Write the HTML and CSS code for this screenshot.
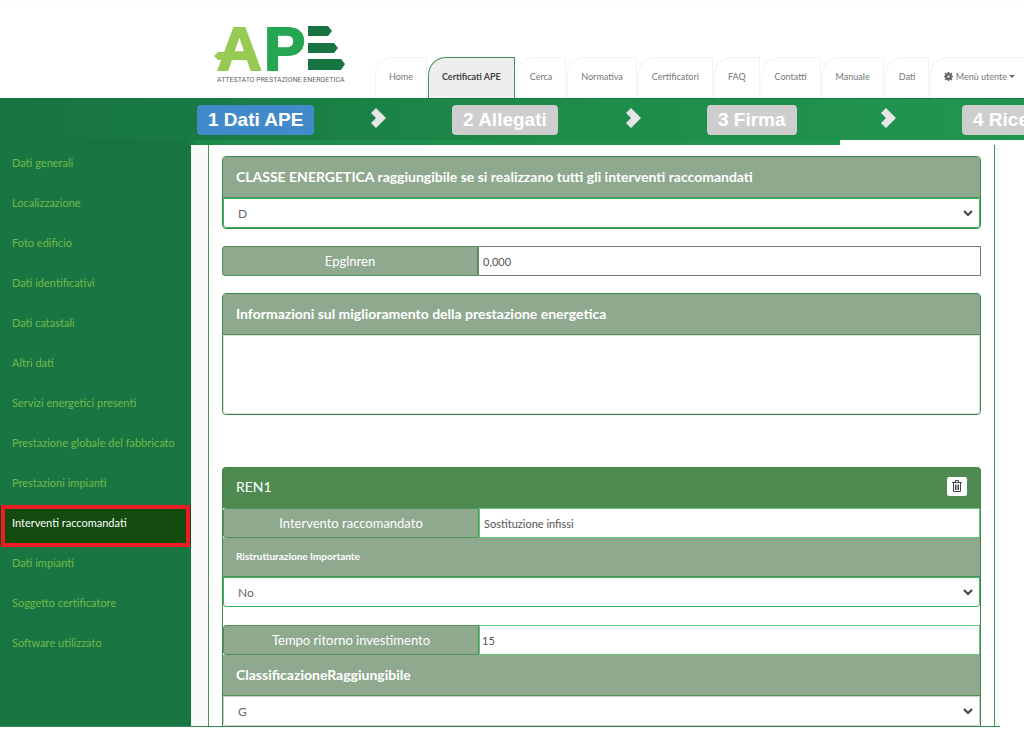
FILE: index.html
```html
<!DOCTYPE html>
<html lang="it">
<head>
    <meta charset="UTF-8">
    <meta name="viewport" content="width=device-width, initial-scale=1.0">
    <title>APE - Interventi raccomandati</title>
    <link rel="stylesheet" href="styles.css">
</head>
<body>

    <header class="header">
        <a class="logo" href="#">
            <svg width="140" height="64" viewBox="0 0 140 64" role="img" aria-label="APE Attestato Prestazione Energetica">
                <text class="logo-a" x="3" y="46">A</text>
                <path fill="#97cb53" d="M0 32l4-4h22v8H4z"/>
                <text class="logo-p" x="50" y="46">P</text>
                <g fill="#187441">
                    <path d="M94 2h20l4 5-4 5H94z"/>
                    <path d="M94 19h26l4 5-4 5H94z"/>
                    <path d="M94 35h33l4 5-4 6H94z"/>
                </g>
                <text class="logo-text" x="3" y="58">ATTESTATO PRESTAZIONE ENERGETICA</text>
            </svg>
        </a>
        <nav class="tabs">
            <a class="tab" href="#">Home</a>
            <a class="tab active" href="#">Certificati APE</a>
            <a class="tab" href="#">Cerca</a>
            <a class="tab" href="#">Normativa</a>
            <a class="tab" href="#">Certificatori</a>
            <a class="tab" href="#">FAQ</a>
            <a class="tab" href="#">Contatti</a>
            <a class="tab" href="#">Manuale</a>
            <a class="tab" href="#">Dati</a>
            <a class="tab" href="#">
                <svg class="gear" width="9" height="9" viewBox="0 0 16 16">
                    <circle cx="8" cy="8" r="4" fill="none" stroke="#666" stroke-width="4"/>
                    <path stroke="#666" stroke-width="3" d="M8 0v4M8 12v4M0 8h4M12 8h4M2 2l3 3M11 11l3 3M14 2l-3 3M5 11l-3 3"/>
                </svg>
                Menù utente<span class="caret"></span>
            </a>
        </nav>
    </header>

    <div class="steps">
        <div class="step">
            <a class="badge current" href="#">1 Dati APE</a>
            <svg width="16" height="22" viewBox="0 0 16 22"><path d="M0 6l5-5 10 10-10 10-5-5 5-5z" fill="#e6e6e6"/></svg>
        </div>
        <div class="step">
            <a class="badge" href="#">2 Allegati</a>
            <svg width="16" height="22" viewBox="0 0 16 22"><path d="M0 6l5-5 10 10-10 10-5-5 5-5z" fill="#e6e6e6"/></svg>
        </div>
        <div class="step">
            <a class="badge" href="#">3 Firma</a>
            <svg width="16" height="22" viewBox="0 0 16 22"><path d="M0 6l5-5 10 10-10 10-5-5 5-5z" fill="#e6e6e6"/></svg>
        </div>
        <div class="step">
            <a class="badge" href="#">4 Ricevuta</a>
        </div>
    </div>
    <div class="steps-edge"></div>

    <div class="page">
        <nav class="sidebar">
            <a href="#">Dati generali</a>
            <a href="#">Localizzazione</a>
            <a href="#">Foto edificio</a>
            <a href="#">Dati identificativi</a>
            <a href="#">Dati catastali</a>
            <a href="#">Altri dati</a>
            <a href="#">Servizi energetici presenti</a>
            <a href="#">Prestazione globale del fabbricato</a>
            <a href="#">Prestazioni impianti</a>
            <a class="active" href="#">Interventi raccomandati</a>
            <a href="#">Dati impianti</a>
            <a href="#">Soggetto certificatore</a>
            <a href="#">Software utilizzato</a>
        </nav>

        <main class="content">
            <form class="panel">
                <div class="card">
                    <label class="card-head" for="classe">CLASSE ENERGETICA raggiungibile se si realizzano tutti gli interventi raccomandati</label>
                    <select class="valid" id="classe">
                        <option>D</option>
                    </select>
                </div>

                <div class="row">
                    <label for="epglnren">Epglnren</label>
                    <input class="plain" type="text" id="epglnren" value="0,000">
                </div>

                <div class="card info">
                    <label class="card-head" for="info">Informazioni sul miglioramento della prestazione energetica</label>
                    <textarea id="info"></textarea>
                </div>

                <section class="card ren">
                    <div class="ren-head">
                        <span>REN1</span>
                        <button class="delete" type="button" aria-label="Elimina">
                            <svg width="10" height="12" viewBox="0 0 10 12" fill="none" stroke="#444">
                                <path d="M0 2.500h10M3.500 2V.5h3V2M1.500 3v8.500h7V3M3.500 4.500v5.500M5 4.500v5.500M6.500 4.500v5.500"/>
                            </svg>
                        </button>
                    </div>
                    <div class="row">
                        <label for="intervento">Intervento raccomandato</label>
                        <input type="text" id="intervento" value="Sostituzione infissi">
                    </div>
                    <label class="card-head small" for="ristrutturazione">Ristrutturazione Importante</label>
                    <select class="valid" id="ristrutturazione">
                        <option>No</option>
                    </select>
                    <div class="row spaced">
                        <label for="tempo">Tempo ritorno investimento</label>
                        <input class="tight" type="text" id="tempo" value="15">
                    </div>
                    <label class="card-head" for="classificazione">ClassificazioneRaggiungibile</label>
                    <select id="classificazione">
                        <option>G</option>
                    </select>
                </section>
            </form>
        </main>
    </div>

</body>
</html>
```
FILE: styles.css
```css
* {
    margin: 0;
    padding: 0;
    box-sizing: border-box;
}

body {
    font-family: Lato, 'Open Sans', sans-serif;
    font-size: 12px;
    color: #555;
    background-color: #fff;
}

a {
    text-decoration: none;
}

/* Testata */
.header {
    display: flex;
    align-items: flex-end;
    height: 98px;
    padding-left: 214px;
    overflow: hidden;
    border-top: 8px solid #fdfdfd;
}

.logo {
    flex: none;
    width: 161px;
    height: 74px;
}

.logo svg {
    overflow: visible;
}

.logo text {
    font-family: 'Liberation Sans', sans-serif;
    font-size: 62px;
    font-weight: bold;
}

.logo .logo-a {
    fill: #97cb53;
    stroke: #97cb53;
    stroke-width: 2px;
}

.logo .logo-p {
    fill: #25a653;
    stroke: #25a653;
    stroke-width: 2px;
}

.logo .logo-text {
    font-family: Roboto, sans-serif;
    font-size: 7px;
    font-weight: normal;
    fill: #666;
}

.tabs {
    display: flex;
    gap: 1px;
}

.tab {
    flex: none;
    height: 41px;
    padding: 0 13px;
    line-height: 38px;
    font-size: 9px;
    white-space: nowrap;
    color: #777;
    border: 1px solid #f3f3f3;
    border-bottom: none;
    border-top-left-radius: 18px;
}

.tab.active {
    color: #444;
    font-weight: bold;
    background-color: #eee;
    border-color: #3f8f58;
}

.gear {
    vertical-align: -1px;
}

.caret {
    display: inline-block;
    margin-left: 2px;
    vertical-align: 2px;
    border: 3px solid transparent;
    border-top-color: #666;
    border-bottom: none;
}

/* Passi della procedura */
.steps {
    display: grid;
    grid-template-columns: repeat(4, 255px);
    height: 42px;
    padding-left: 197px;
    overflow: hidden;
    border-top: 1px solid #187441;
    background: linear-gradient(to right, #187441, #187a43 18%, #1e8b4b 55%, #21964f);
}

.step {
    display: grid;
    grid-template-columns: 174px 1fr;
    align-items: center;
    justify-items: start;
}

.step svg {
    margin-bottom: 4px;
}

.badge {
    height: 30px;
    padding: 0 11px;
    line-height: 29px;
    font-family: 'Liberation Sans', sans-serif;
    font-size: 19px;
    font-weight: bold;
    white-space: nowrap;
    color: #fff;
    background-color: #cecece;
    border-radius: 4px;
}

.badge.current {
    background-color: #428bca;
}

.steps-edge {
    width: 82%;
    height: 5px;
    background: linear-gradient(to right, #187441 22%, #1e8b4b 24%, #21964f);
}

/* Menu laterale */
.page {
    display: flex;
    margin-right: 24px;
    border-bottom: 1px solid #2f8a55;
}

.sidebar {
    flex: 0 0 191px;
    background-color: #187642;
}

.sidebar a {
    display: block;
    height: 40px;
    padding-left: 12px;
    line-height: 35px;
    font-size: 11px;
    color: #74b94a;
}

.sidebar a.active {
    position: relative;
    color: #fff;
    background-color: #124a10;
}

.sidebar a.active::after {
    content: "";
    position: absolute;
    inset: 0 1px -2px 1px;
    border: 4px solid #ed1c24;
}

/* Contenuto */
.content {
    flex: 1;
    padding: 0 5px 0 17px;
    background-color: #f9fafa;
}

.panel {
    padding: 11px 13px 0;
    background-color: #fff;
    border: 1px solid #4f9259;
    border-width: 0 1px;
}

.card {
    display: flex;
    flex-direction: column;
    border: 1px solid #3f8748;
    border-radius: 4px;
}

.card-head {
    height: 41px;
    padding: 0 13px;
    line-height: 40px;
    font-size: 14px;
    font-weight: bold;
    color: #fff;
    background-color: #8fa98f;
    border-bottom: 1px solid #4f9259;
}

.card-head.small {
    height: 39px;
    line-height: 36px;
    font-size: 10px;
}

select {
    appearance: none;
    height: 30px;
    padding: 0 24px 0 14px;
    font-family: inherit;
    font-size: 12px;
    color: #666;
    background: #fff url("data:image/svg+xml,%3Csvg xmlns='http://www.w3.org/2000/svg' width='10' height='7' fill='none' stroke='%23444' stroke-width='2'%3E%3Cpath d='M1 1l4 4 4-4'/%3E%3C/svg%3E") no-repeat right 6px center;
    border: 1px solid #ccc;
    border-radius: 0 0 3px 3px;
}

select.valid {
    border-color: #3bb45a;
}

.row {
    display: flex;
    height: 30px;
    margin: 17px 0;
}

.row label {
    flex: 0 0 256px;
    line-height: 28px;
    font-size: 13px;
    text-align: center;
    color: #fff;
    background-color: #8fa98f;
    border: 1px solid #4f9259;
    border-radius: 3px 0 0 3px;
}

.row input {
    flex: 1;
    min-width: 0;
    padding: 0 4px;
    font-family: inherit;
    font-size: 11px;
    color: #555;
    border: 1px solid #5fca7c;
}

.row input.plain {
    border-color: #777;
}

.row input.tight {
    padding: 0 2px;
}

textarea {
    height: 79px;
    padding: 6px 12px;
    font-family: inherit;
    border: 1px solid #ddd;
    border-radius: 0 0 3px 3px;
    resize: none;
}

/* Scheda intervento */
.ren {
    margin-top: 52px;
    border-bottom: none;
    border-radius: 4px 4px 0 0;
}

.ren-head {
    display: flex;
    align-items: center;
    justify-content: space-between;
    height: 40px;
    padding: 0 13px 4px;
    font-size: 14px;
    color: #fff;
    background-color: #4f8b50;
}

.ren .row {
    margin: 0;
}

.ren .row.spaced {
    margin-top: 18px;
}

.delete {
    display: flex;
    align-items: center;
    justify-content: center;
    width: 20px;
    height: 19px;
    background-color: #fff;
    border: none;
    border-radius: 2px;
    cursor: pointer;
}
```
